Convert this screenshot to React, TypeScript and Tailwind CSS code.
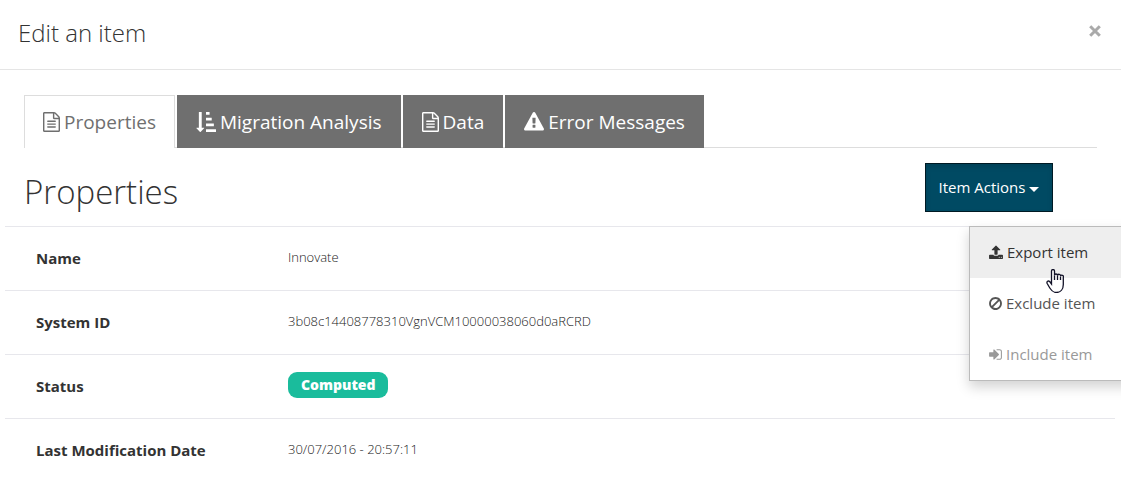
import type { ReactNode } from "react";

const icons = {
  file: "M1596 380q28 28 48 76t20 88v1152q0 40-28 68t-68 28h-1344q-40 0-68-28t-28-68v-1600q0-40 28-68t68-28h896q40 0 88 20t76 48zm-444-244v376h376q-10-29-22-41l-313-313q-12-12-41-22zm384 1528v-1024h-416q-40 0-68-28t-28-68v-416h-768v1536h1280zm-1024-864q0-14 9-23t23-9h704q14 0 23 9t9 23v64q0 14-9 23t-23 9h-704q-14 0-23-9t-9-23v-64zm736 224q14 0 23 9t9 23v64q0 14-9 23t-23 9h-704q-14 0-23-9t-9-23v-64q0-14 9-23t23-9h704zm0 256q14 0 23 9t9 23v64q0 14-9 23t-23 9h-704q-14 0-23-9t-9-23v-64q0-14 9-23t23-9h704z",
  sort: "M736 1440q0 12-10 24l-319 319q-10 9-23 9-12 0-23-9l-320-320q-15-16-7-35 8-20 30-20h192v-1376q0-14 9-23t23-9h192q14 0 23 9t9 23v1376h192q14 0 23 9t9 23zm1056 128v192q0 14-9 23t-23 9h-832q-14 0-23-9t-9-23v-192q0-14 9-23t23-9h832q14 0 23 9t9 23zm-192-512v192q0 14-9 23t-23 9h-640q-14 0-23-9t-9-23v-192q0-14 9-23t23-9h640q14 0 23 9t9 23zm-192-512v192q0 14-9 23t-23 9h-448q-14 0-23-9t-9-23v-192q0-14 9-23t23-9h448q14 0 23 9t9 23zm-192-512v192q0 14-9 23t-23 9h-256q-14 0-23-9t-9-23v-192q0-14 9-23t23-9h256q14 0 23 9t9 23z",
  warning: "M1024 1375v-190q0-14-9.5-23.5t-22.5-9.5h-192q-13 0-22.5 9.5t-9.5 23.5v190q0 14 9.5 23.5t22.5 9.5h192q13 0 22.5-9.5t9.5-23.5zm-2-374l18-459q0-12-10-19-13-11-24-11h-220q-11 0-24 11-10 7-10 21l17 457q0 10 10 16.5t24 6.5h185q14 0 23.5-6.5t10.5-16.5zm-14-934l768 1408q35 63-2 126-17 29-46.5 46t-63.5 17h-1536q-34 0-63.5-17t-46.5-46q-37-63-2-126l768-1408q17-31 47-49t65-18 65 18 47 49z",
  upload: "M1344 1472q0-26-19-45t-45-19-45 19-19 45 19 45 45 19 45-19 19-45zm256 0q0-26-19-45t-45-19-45 19-19 45 19 45 45 19 45-19 19-45zm128-224v320q0 40-28 68t-68 28h-1472q-40 0-68-28t-28-68v-320q0-40 28-68t68-28h427q21 56 70.5 92t110.5 36h256q61 0 110.5-36t70.5-92h427q40 0 68 28t28 68zm-325-648q-17 40-59 40h-256v448q0 26-19 45t-45 19h-256q-26 0-45-19t-19-45v-448h-256q-42 0-59-40-17-39 14-69l448-448q18-19 45-19t45 19l448 448q31 30 14 69z",
  ban: "M1440 893q0-161-87-295l-754 753q137 89 297 89 111 0 211.5-43.5t173.5-116.5 116-174.5 43-212.5zm-999 299l755-754q-135-91-300-91-148 0-273 73t-198 199-73 274q0 162 89 299zm1223-299q0 157-61 300t-163.5 246-245 164-298.5 61-298.5-61-245-164-163.5-246-61-300 61-299.5 163.5-245.5 245-164 298.5-61 298.5 61 245 164 163.5 245.5 61 299.5z",
  signIn: "M1312 896q0 26-19 45l-544 544q-19 19-45 19t-45-19-19-45v-288h-448q-26 0-45-19t-19-45v-384q0-26 19-45t45-19h448v-288q0-26 19-45t45-19 45 19l544 544q19 19 19 45zm352-352v704q0 119-84.5 203.5t-203.5 84.5h-320q-13 0-22.5-9.5t-9.5-22.5q0-4-1-20t-.5-26.5 3-23.5 10-19.5 20.5-6.5h320q66 0 113-47t47-113v-704q0-66-47-113t-113-47h-312l-11.5-1-11.5-3-8-5.5-7-9-2-13.5q0-4-1-20t-.5-26.5 3-23.5 10-19.5 20.5-6.5h320q119 0 203.5 84.5t84.5 203.5z",
};

function Icon({ name, box = "0 0 1792 1792", className }: { name: keyof typeof icons; box?: string; className: string }) {
  return (
    <svg viewBox={box} className={className} fill="currentColor" aria-hidden="true">
      <path d={icons[name]} />
    </svg>
  );
}

const tabs: { label: string; icon: keyof typeof icons; box: string; size: string; active?: boolean }[] = [
  { label: "Properties", icon: "file", box: "128 0 1536 1792", size: "h-5 w-[17px]", active: true },
  { label: "Migration Analysis", icon: "sort", box: "0 0 1792 1792", size: "size-5" },
  { label: "Data", icon: "file", box: "128 0 1536 1792", size: "h-5 w-[17px]" },
  { label: "Error Messages", icon: "warning", box: "0 0 1792 1792", size: "size-5" },
];

function Row({ label, children }: { label: string; children: ReactNode }) {
  return (
    <tr className="h-16 border-t border-[#e7e7ec] align-top">
      <th scope="row" className="w-[252px] pt-[19px] pl-[31px] text-left text-[15px] leading-6 font-bold text-[#333]">
        {label}
      </th>
      <td className="pt-5 pl-[31px] text-[13px] leading-5 text-[#222]">{children}</td>
    </tr>
  );
}

export default function App() {
  return (
    <main className="min-h-screen overflow-x-hidden bg-white font-['Open_Sans',sans-serif] text-[#333]">
      <header className="flex h-[70px] items-start justify-between border-b border-[#e5e5e5] pt-[17px] pr-[19px] pl-[18px]">
        <h1 className="text-2xl font-light">Edit an item</h1>
        <button type="button" aria-label="Close" className="mt-[7px] text-[#aaa]">
          <svg viewBox="0 0 14 14" className="size-[14px]" aria-hidden="true">
            <path d="M2.200 2.200l9.600 9.600m0-9.600l-9.600 9.600" stroke="currentColor" strokeWidth="3" />
          </svg>
        </button>
      </header>

      <nav role="tablist" className="mx-6 mt-[25px] flex gap-0.5 border-b border-[#ddd]">
        {tabs.map((tab) => (
          <button
            key={tab.label}
            type="button"
            role="tab"
            aria-selected={!!tab.active}
            className={
              tab.active
                ? "-mb-px flex h-[53px] items-center gap-1 border border-b-0 border-[#ddd] bg-white px-[18px] text-[19px] text-[#6f6f6f]"
                : "-mb-px flex h-[53px] items-center gap-1 border border-[#6f6f6f] border-b-0 bg-[#6f6f6f] px-[18px] text-[19px] text-white"
            }
          >
            <Icon name={tab.icon} box={tab.box} className={tab.size} />
            {tab.label}
          </button>
        ))}
      </nav>

      <section>
        <div className="flex items-start justify-between pt-[15px] pr-[68px] pl-6">
          <h2 className="pt-1 text-[33px] leading-[50px] font-light">Properties</h2>
          <div className="relative">
            <button
              type="button"
              aria-haspopup="menu"
              aria-expanded="true"
              className="flex h-[49px] w-32 items-center justify-center gap-1 border border-[#001a24] bg-[#004a63] text-[15px] text-white shadow-[inset_0_3px_5px_rgba(0,0,0,0.125)]"
            >
              Item Actions
              <svg viewBox="0 0 10 5" className="mt-1 h-[5px] w-[10px]" fill="currentColor" aria-hidden="true">
                <path d="M0 0h10L5 5z" />
              </svg>
            </button>
            <div
              role="menu"
              className="absolute top-[63px] left-11 z-10 w-[170px] border border-[#bbb] bg-white text-[15px] shadow-[0_6px_12px_rgba(0,0,0,0.175)]"
            >
              <button type="button" role="menuitem" className="flex h-[51px] w-full items-center gap-1 bg-[#eee] pl-[19px] text-[#333]">
                <Icon name="upload" box="64 0 1664 1792" className="h-[15px] w-[14px]" />
                Export item
              </button>
              <button type="button" role="menuitem" className="flex h-[51px] w-full items-center gap-1 pl-[19px] text-[#555]">
                <Icon name="ban" box="128 0 1536 1792" className="h-[15px] w-[13px]" />
                Exclude item
              </button>
              <button type="button" role="menuitem" disabled className="flex h-[51px] w-full items-center gap-1 pl-[19px] text-[#999]">
                <Icon name="signIn" box="128 0 1536 1792" className="h-[15px] w-[13px]" />
                Include item
              </button>
              <svg viewBox="0 0 18 24" className="absolute top-[42px] left-[76px] h-6 w-[18px]" aria-hidden="true">
                <path
                  d="M5.500 14V2a1.500 1.500 0 0 1 3 0V6.500a1.500 1.500 0 0 1 3 0a1.500 1.500 0 0 1 3 .7a1.300 1.300 0 0 1 2.800 1V15.500c0 4.500-2.500 8-7 8c-3.500 0-5-2-6.500-4.500L1.200 14.500C.3 12.500 2.200 11.300 3.700 12.500L5.500 15z"
                  fill="#fff"
                  stroke="#111127"
                  strokeWidth="1.300"
                />
                <path d="M8.500 6.500V11M11.500 6.500V11M14.500 7.500V11" stroke="#111127" strokeWidth="1.300" />
              </svg>
            </div>
          </div>
        </div>

        <div className="mt-[9px] pr-1.5 pl-[5px]">
          <table className="w-full border-collapse">
            <tbody>
              <Row label="Name"><span className="font-light">Innovate</span></Row>
              <Row label="System ID"><span className="font-light">3b08c14408778310VgnVCM10000038060d0aRCRD</span></Row>
              <Row label="Status">
                <span className="-mt-1.5 inline-block rounded-[9px] bg-[#1abc9c] px-[13px] text-[14px] leading-[26px] font-extrabold text-white">
                  Computed
                </span>
              </Row>
              <Row label="Last Modification Date"><span className="font-light">30/07/2016 - 20:57:11</span></Row>
            </tbody>
          </table>
        </div>
      </section>
    </main>
  );
}
